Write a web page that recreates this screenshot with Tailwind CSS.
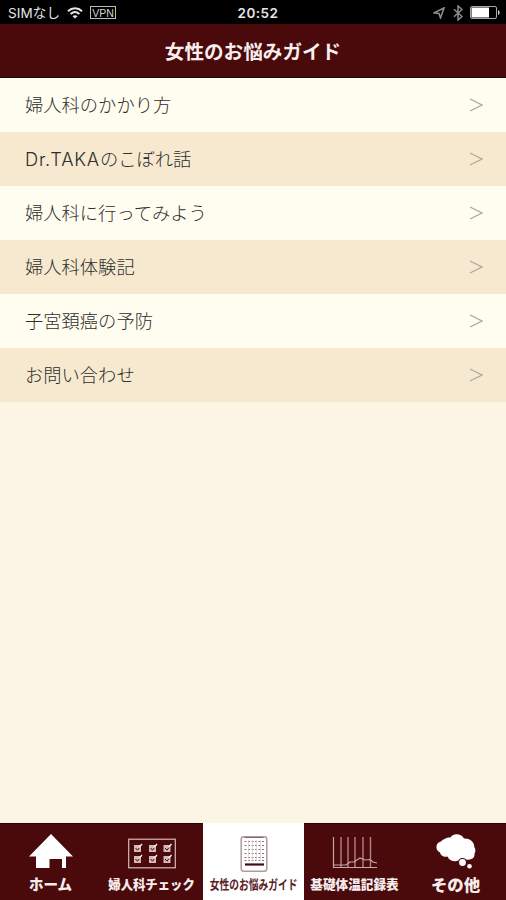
<!DOCTYPE html>
<html lang="ja">
<head>
    <meta charset="UTF-8">
    <meta name="viewport" content="width=device-width, initial-scale=1.0">
    <title>女性のお悩みガイド</title>
    <script src="https://cdn.jsdelivr.net/npm/@tailwindcss/browser@4"></script>
</head>
<body class="bg-[#fcf4e4] font-['Noto_Sans_CJK_JP',sans-serif]">
    <div class="flex flex-col h-[900px] w-[506px] overflow-hidden">
        <!-- ステータスバー -->
        <div class="grid grid-cols-3 items-center h-6 shrink-0 bg-black text-[#e4e4e4] pl-2 pr-1.5">
            <div class="flex items-center">
                <span class="w-[53px] whitespace-nowrap text-[13.5px] leading-6 tracking-[0.1px] font-['Inter','Noto_Sans_CJK_JP',sans-serif]">SIMなし</span>
                <svg class="w-4 h-3 ml-1.5" viewBox="0 0 16 12" fill="none" stroke="#e4e4e4" stroke-width="2">
                    <path d="M1 4.2C5 .4 11 .4 15 4.2M3.6 7C6.3 4.6 9.7 4.6 12.4 7"/>
                    <path d="M8 11.6 5.5 9.2Q8 7.2 10.5 9.2Z" fill="#e4e4e4" stroke="none"/>
                </svg>
                <span class="flex items-center justify-center ml-[7px] w-[26px] h-[13px] border border-[#bdbdbd] pt-px text-[10.5px] leading-none text-[#d0d0d0] font-['Liberation_Sans',sans-serif]">VPN</span>
            </div>
            <div class="text-center text-[13.5px] leading-6 font-semibold tracking-[0.5px] pl-2 pt-px font-['Inter',sans-serif]">20:52</div>
            <div class="flex items-center justify-end">
                <svg class="w-3 h-3" viewBox="0 0 12 12" fill="none" stroke="#8d8d8d" stroke-width="1.5">
                    <path d="M11 1 1 5.8 6 6.5 7.5 11Z"/>
                </svg>
                <svg class="w-[10px] h-4 ml-2" viewBox="0 0 10 16" fill="none" stroke="#8d8d8d" stroke-width="1.5">
                    <path d="M1 4.3 9 11.5 5 15V1L9 4.5 1 11.7"/>
                </svg>
                <svg class="w-[30px] h-[13px] ml-[7px]" viewBox="0 0 30 13">
                    <rect x=".5" y=".5" width="26" height="12" rx="1.5" fill="none" stroke="#a8a8a8"/>
                    <path d="M1.5 1.5H19V11.5H1.5Z" fill="#fff"/>
                    <path d="M28 4Q29.6 4.5 29.6 6.5T28 9Z" fill="#d8d8d8"/>
                </svg>
            </div>
        </div>

        <!-- ヘッダー -->
        <header class="h-[54px] shrink-0 bg-[#4a090b] border-b border-[#2c0304] text-center">
            <h1 class="text-[19.6px] leading-[54px] font-bold text-[#f8eeee]">女性のお悩みガイド</h1>
        </header>

        <!-- メニュー -->
        <ul class="flex-1 text-[18.3px] leading-[54px] font-light text-[#2e2e2e] font-['Inter','Noto_Sans_CJK_JP',sans-serif]">
            <li class="flex items-center justify-between h-[54px] pl-[25px] pr-[23px] bg-[#fffdf0]">
                <span>婦人科のかかり方</span>
                <svg class="w-[14px] h-[14px]" viewBox="0 0 14 14" fill="none" stroke="#aaa89e" stroke-width="1.2"><path d="M1 1 13 7 1 13"/></svg>
            </li>
            <li class="flex items-center justify-between h-[54px] pl-[25px] pr-[23px] bg-[#f6e9d0]">
                <span><span class="tracking-[0.75px]">Dr.TAKA</span>のこぼれ話</span>
                <svg class="w-[14px] h-[14px]" viewBox="0 0 14 14" fill="none" stroke="#aaa89e" stroke-width="1.2"><path d="M1 1 13 7 1 13"/></svg>
            </li>
            <li class="flex items-center justify-between h-[54px] pl-[25px] pr-[23px] bg-[#fffdf0]">
                <span>婦人科に行ってみよう</span>
                <svg class="w-[14px] h-[14px]" viewBox="0 0 14 14" fill="none" stroke="#aaa89e" stroke-width="1.2"><path d="M1 1 13 7 1 13"/></svg>
            </li>
            <li class="flex items-center justify-between h-[54px] pl-[25px] pr-[23px] bg-[#f6e9d0]">
                <span>婦人科体験記</span>
                <svg class="w-[14px] h-[14px]" viewBox="0 0 14 14" fill="none" stroke="#aaa89e" stroke-width="1.2"><path d="M1 1 13 7 1 13"/></svg>
            </li>
            <li class="flex items-center justify-between h-[54px] pl-[25px] pr-[23px] bg-[#fffdf0]">
                <span>子宮頚癌の予防</span>
                <svg class="w-[14px] h-[14px]" viewBox="0 0 14 14" fill="none" stroke="#aaa89e" stroke-width="1.2"><path d="M1 1 13 7 1 13"/></svg>
            </li>
            <li class="flex items-center justify-between h-[54px] pl-[25px] pr-[23px] bg-[#f6e9d0]">
                <span>お問い合わせ</span>
                <svg class="w-[14px] h-[14px]" viewBox="0 0 14 14" fill="none" stroke="#aaa89e" stroke-width="1.2"><path d="M1 1 13 7 1 13"/></svg>
            </li>
        </ul>

        <!-- タブバー -->
        <nav class="grid grid-cols-[101px_102px_101px_101px_101px] h-[77px] shrink-0 bg-[#4a090b] text-[#f6ecec] font-black">
            <a class="flex flex-col items-center pt-2.5 border-t border-[#2c0304]">
                <svg class="w-11 h-[38px]" viewBox="0 0 44 38" fill="#fff">
                    <path d="M22 0 44 22.5H37V34H33V25H20.500V34H7V22.500H0Z"/>
                </svg>
                <span class="text-[14.5px] leading-5 mt-0.5 whitespace-nowrap">ホーム</span>
            </a>
            <a class="flex flex-col items-center pt-2.5 border-t border-[#2c0304]">
                <svg class="w-12 h-[38px]" viewBox="0 0 48 38" fill="none">
                    <rect x=".7" y="5.2" width="46.6" height="28.6" stroke="#d8bcba" stroke-width="1.2"/>
                    <path d="M6 11h7v7H6zM21 11h7v7h-7zM35.500 11h7v7h-7zM6 22h7v7H6zM21 22h7v7h-7zM35.500 22h7v7h-7z" fill="#d4bab8"/>
                    <path d="M7.500 14l2 2.200 3-4M22.500 14l2 2.200 3-4M37 14l2 2.200 3-4M7.500 25l2 2.200 3-4M22.500 25l2 2.200 3-4M37 25l2 2.200 3-4" stroke="#4a090b" stroke-width="1"/>
                    <path d="M11 13.500l3-3.500M26 13.500l3-3.500M40.500 13.500l3-3.500M11 24.500l3-3.500M26 24.500l3-3.500M40.500 24.500l3-3.500" stroke="#fff" stroke-width="1.200"/>
                </svg>
                <span class="text-[13px] leading-5 mt-0.5 whitespace-nowrap scale-x-95">婦人科チェック</span>
            </a>
            <a class="flex flex-col items-center pt-[11px] bg-white text-[#5a2024] font-bold">
                <svg class="w-7 h-[38px]" viewBox="0 0 28 38" fill="none">
                    <rect x="1.200" y="2.700" width="25.600" height="34.600" rx="2.500" stroke="#b39a9c" stroke-width="1.500"/>
                    <path d="M4.500 3.500H23.500" stroke="#85666a"/>
                    <path d="M4.500 7.500H24M4.500 11.500H24M4.500 15.500H24M4.500 19.500H24M4.500 23.500H24M4.500 26.500H24" stroke="#8d7478" stroke-dasharray="2 1.500"/>
                    <path d="M8.500 6V27M12.500 6V27M16.500 6V27M20.500 6V27" stroke="#ddd2d3" stroke-width=".7"/>
                    <path d="M5 30.500H24" stroke="#43090c" stroke-width="2.200"/>
                </svg>
                <span class="text-[13px] leading-5 mt-0.5 whitespace-nowrap scale-x-[0.75]">女性のお悩みガイド</span>
            </a>
            <a class="flex flex-col items-center pt-2.5 border-t border-[#2c0304]">
                <svg class="w-[46px] h-[38px]" viewBox="0 0 46 38" fill="none" stroke="#c9a6a5" stroke-width="1.200">
                    <path d="M1.500 3V33.500H45"/>
                    <path d="M9 3V33M16 3V33M23 3V33M31 3V33M38.500 3V33" stroke="#b08384" stroke-width="1.400"/>
                    <path d="M2 31H14L18 28H22L28 24 33 26 38 25.500 41 28 45 29"/>
                </svg>
                <span class="text-[13px] leading-5 mt-0.5 whitespace-nowrap scale-x-[0.97]">基礎体温記録表</span>
            </a>
            <a class="flex flex-col items-center pt-2.5 border-t border-[#2c0304]">
                <svg class="w-10 h-[38px]" viewBox="0 0 40 38" fill="#fff">
                    <path d="M8.500 5C11 3.500 13 3.300 14.500 3.500 17-.8 25-1 28 4.500 33 4 38.500 7.500 38.300 13 40 15.500 39.500 18 38.500 19.500 39 24 35.500 26.500 30 25.500L25.500 24.500C22.500 28.500 14 28.500 11.500 22.500 7.500 23.300 4.500 21.500 4 18.500-1 16.500-.8 8.500 5 7.500 6 6.300 7 5.700 8.500 5Z"/>
                    <circle cx="26.500" cy="28.500" r="4" stroke="#4a090b" stroke-width="1.200"/>
                    <circle cx="33.500" cy="32.300" r="2.300"/>
                </svg>
                <span class="text-[16.4px] leading-5 mt-0.5 whitespace-nowrap">その他</span>
            </a>
        </nav>
    </div>
</body>
</html>
